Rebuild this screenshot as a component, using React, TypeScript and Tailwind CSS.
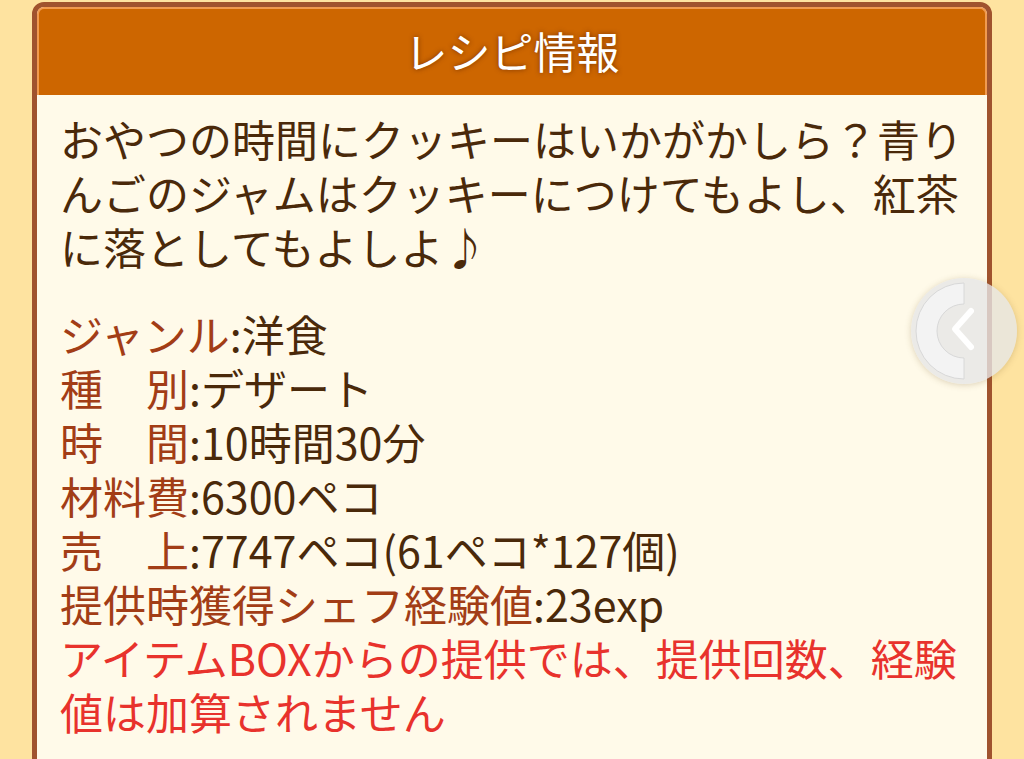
import React from 'react';

const fields: { label: string; value: string }[] = [
  { label: 'ジャンル', value: '洋食' },
  { label: '種　別', value: 'デザート' },
  { label: '時　間', value: '10時間30分' },
  { label: '材料費', value: '6300ペコ' },
  { label: '売　上', value: '7747ペコ(61ペコ*127個)' },
  { label: '提供時獲得シェフ経験値', value: '23exp' },
];

function BackButton() {
  return (
    <div className="absolute left-[911px] top-[278px] h-[106px] w-[106px] rounded-full bg-[#e6e6e6]/80 shadow-[0_1px_6px_rgba(120,90,40,0.25)]">
      <svg width="106" height="106" viewBox="0 0 106 106" className="absolute inset-0">
        <path
          d="M53 5 A48 48 0 0 0 53 101 L53 80 A27 27 0 0 1 53 26 Z"
          fill="#f3f3f3"
          stroke="#d8d8d8"
          strokeWidth="1"
        />
        <path d="M60 33 L44 51 L60 69" fill="none" stroke="#ffffff" strokeWidth="6" strokeLinecap="round" strokeLinejoin="round" />
      </svg>
    </div>
  );
}

export default function App() {
  return (
    <div
      className="relative h-[759px] w-[1024px] overflow-hidden bg-[#fee3a0]"
      style={{ fontFamily: '"Noto Sans CJK JP", "Noto Sans", sans-serif' }}
    >
      <div className="ml-[32px] mt-[2px] w-[960px] rounded-[12px] border-[5px] border-[#a0532e] bg-[#fffae9]">
        <div className="flex h-[88px] items-center justify-center rounded-t-[7px] border-x-2 border-t-2 border-[#f19a4f] bg-[#cd6600] pb-[4px]">
          <h1 className="text-[43px] leading-none font-normal text-white [text-shadow:0_0_5px_rgba(110,45,0,0.85)]">
            レシピ情報
          </h1>
        </div>
        <div className="pl-[23px] pr-[14px] pt-[16px] pb-[30px] text-[43px] leading-[54px] text-[#4a290a]">
          <p>
            おやつの時間にクッキーはいかがかしら？青りんごのジャムはクッキーにつけてもよし、紅茶に落としてもよしよ♪
          </p>
          <div className="mt-[33px]">
            {fields.map((f, i) => (
              <div key={i} className="whitespace-nowrap">
                <span className="text-[#a23d16]">{f.label}</span>
                <span>:{f.value}</span>
              </div>
            ))}
            <p className="text-[#e8322c]">アイテムBOXからの提供では、提供回数、経験値は加算されません</p>
          </div>
        </div>
      </div>
      <BackButton />
    </div>
  );
}
